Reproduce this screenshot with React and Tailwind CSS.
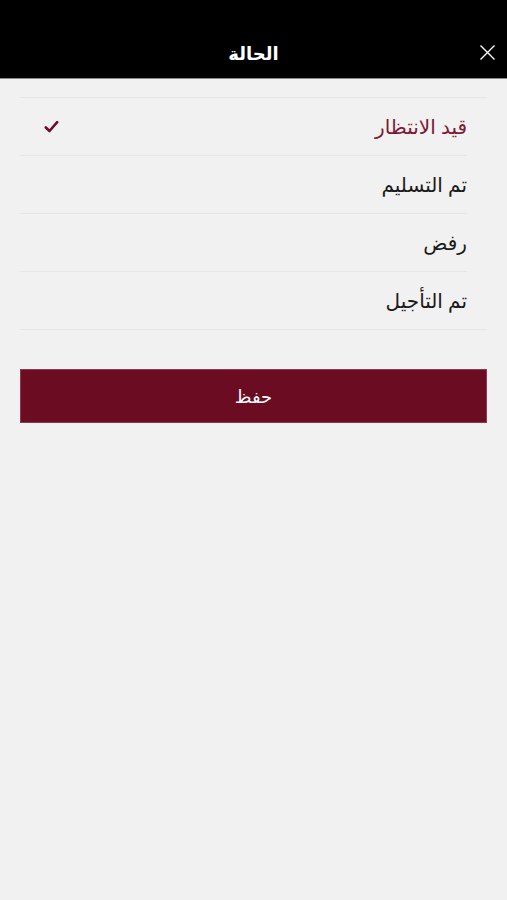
import React, { useState } from 'react'

const statuses = ['قيد الانتظار', 'تم التسليم', 'رفض', 'تم التأجيل']

export default function App() {
    const [selected, setSelected] = useState(0)

    return (
        <div dir="rtl" className="min-h-[900px] bg-[#f1f1f1] font-['Noto_Sans','DejaVu_Sans',sans-serif]">
            {/* Header */}
            <div className="relative h-[79px] bg-black border-b border-[#8a8a8a] flex items-end justify-center pb-[16px]">
                <span className="text-white text-[18px] font-bold leading-none">الحالة</span>
                <button className="absolute left-[479px] top-[44px] w-[17px] h-[17px]">
                    <svg viewBox="0 0 17 17" className="w-[17px] h-[17px]" fill="none" stroke="#ffffff" strokeWidth="1.4">
                        <path d="M1.5 1.5 L15.5 15.5 M15.5 1.5 L1.5 15.5" />
                    </svg>
                </button>
            </div>

            {/* Options */}
            <div className="px-[20px] pt-[18px]">
                <div className="border-t border-[#e6e6e6]">
                    {statuses.map((label, i) => {
                        const last = i === statuses.length - 1
                        return (
                            <div
                                key={label}
                                onClick={() => setSelected(i)}
                                className={last ? 'border-b border-[#e6e6e6] h-[58px]' : 'h-[58px]'}
                            >
                                <div className={last ? 'h-[58px] flex items-center pr-[20px] pl-[24px]' : 'h-[58px] flex items-center mr-[20px] pl-[24px] border-b border-[#e6e6e6]'}>
                                    <span className={selected === i ? 'flex-1 text-[20px] text-[#7b1a33]' : 'flex-1 text-[20px] text-[#1a1a1a]'}>
                                        {label}
                                    </span>
                                    {selected === i && (
                                        <svg viewBox="0 0 15 13" className="w-[15px] h-[13px]" fill="none" stroke="#6b0f28" strokeWidth="2.6" strokeLinecap="round" strokeLinejoin="round">
                                            <path d="M1.8 7.5 L5.5 11 L13.2 2.2" />
                                        </svg>
                                    )}
                                </div>
                            </div>
                        )
                    })}
                </div>

                {/* Save button */}
                <button className="mt-[39px] w-full h-[54px] bg-[#6b0c22] border border-[#8c3b4e] text-white text-[18px]">
                    حفظ
                </button>
            </div>
        </div>
    )
}
